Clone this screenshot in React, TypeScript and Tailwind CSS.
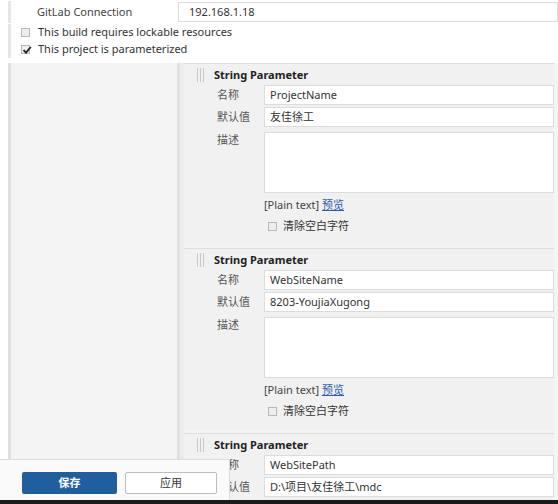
import React from "react";

const FONT = "font-['Noto_Sans','Noto_Sans_CJK_SC',sans-serif]";

function Box({ checked }: { checked?: boolean }) {
  return (
    <span className="relative inline-flex h-[9px] w-[9px] shrink-0 items-center justify-center border border-[#b8b8b8] bg-[#eeeeee]">
      {checked && (
        <svg viewBox="0 0 10 10" className="absolute -top-[1px] left-0 h-[10px] w-[10px]">
          <path d="M1.5 5.2 L4 7.6 L8.8 2" fill="none" stroke="#222" strokeWidth="1.8" />
        </svg>
      )}
    </span>
  );
}

function Handle() {
  return (
    <div className="ml-[13px] mr-[9px] flex h-[14px] w-[8px] gap-[2px]">
      <div className="w-px bg-[#c8c8c8]" />
      <div className="w-px bg-[#c8c8c8]" />
      <div className="w-px bg-[#c8c8c8]" />
    </div>
  );
}

function Row({ label, value }: { label: string; value: string }) {
  return (
    <div className="flex h-[20px] items-center">
      <div className="w-[80px] pl-[33px] text-[#555]">{label}</div>
      <div className="flex h-full flex-1 items-center border border-[#dcdcdc] bg-white pl-[5px] text-[#333]">{value}</div>
    </div>
  );
}

function StringParam({ name, value, full }: { name: string; value: string; full?: boolean }) {
  return (
    <div className="border-t border-[#dedede] bg-[#f1f1f1] pt-[2px] pb-[12px]">
      <div className="flex h-[18px] items-center">
        <Handle />
        <span className="font-bold text-[#222]">String Parameter</span>
      </div>
      <div className="mt-[1px] flex flex-col gap-[2px]">
        <Row label="名称" value={name} />
        <Row label="默认值" value={value} />
      </div>
      {full && (
        <>
          <div className="mt-[5px] flex">
            <div className="w-[80px] pl-[33px] text-[#555]">描述</div>
            <div className="h-[61px] flex-1 border border-[#dcdcdc] bg-white" />
          </div>
          <div className="mt-[5px] flex h-[14px] items-center pl-[80px] text-[#444]">
            [Plain text]&nbsp;<span className="text-[#2a5db0] underline">预览</span>
          </div>
          <div className="mt-[7px] flex h-[14px] items-center gap-[6px] pl-[84px] text-[#333]">
            <Box />
            <span>清除空白字符</span>
          </div>
        </>
      )}
    </div>
  );
}

export default function App() {
  return (
    <div className={`relative h-[504px] w-[558px] overflow-hidden bg-white text-[11px] ${FONT}`}>
      {/* GitLab connection */}
      <div className="flex h-[23px] items-center pl-[8px] pt-[1px]">
        <div className="flex h-full w-[170px] items-center border-l-[3px] border-[#e6e6e6] pl-[26px] text-[#444]">
          GitLab Connection
        </div>
        <div className="flex h-[20px] flex-1 items-center border border-[#dcdcdc] bg-white pl-[10px] text-[#333]">
          192.168.1.18
        </div>
      </div>

      {/* checkboxes */}
      <div className="mt-[1px] flex flex-col pl-[8px]">
        <div className="flex h-[17px] items-center gap-[8px] border-l-[3px] border-[#e6e6e6] pl-[10px] text-[#333]">
          <Box />
          <span>This build requires lockable resources</span>
        </div>
        <div className="flex h-[17px] items-center gap-[8px] border-l-[3px] border-[#e6e6e6] pl-[10px] text-[#333]">
          <Box checked />
          <span>This project is parameterized</span>
        </div>
      </div>

      {/* parameters */}
      <div className="mt-[5px] flex">
        <div className="ml-[8px] w-[172px] shrink-0 border-l-[3px] border-r-[3px] border-[#e0e0e0] bg-[#f4f4f4]" />
        <div className="flex flex-1 flex-col gap-[3px] border-l-[4px] border-[#ececec] bg-[#f4f4f4] pr-[4px]">
          <StringParam name="ProjectName" value="友佳徐工" full />
          <StringParam name="WebSiteName" value="8203-YoujiaXugong" full />
          <StringParam name="WebSitePath" value="D:\项目\友佳徐工\mdc" />
        </div>
      </div>

      {/* bottom sticky buttons */}
      <div className="absolute bottom-[4px] left-0 flex h-[41px] w-[230px] items-start gap-[8px] border-t border-r border-[#dcdcdc] bg-[#fafafa] pl-[22px] pt-[12px]">
        <button className="h-[22px] w-[95px] rounded-[2px] bg-[#1f5f9f] font-bold text-white">保存</button>
        <button className="h-[22px] w-[92px] rounded-[2px] border border-[#bdbdbd] bg-white text-[#333]">应用</button>
      </div>
      <div className="absolute bottom-0 left-0 h-[4px] w-full bg-[#1b1b1b]" />
    </div>
  );
}
